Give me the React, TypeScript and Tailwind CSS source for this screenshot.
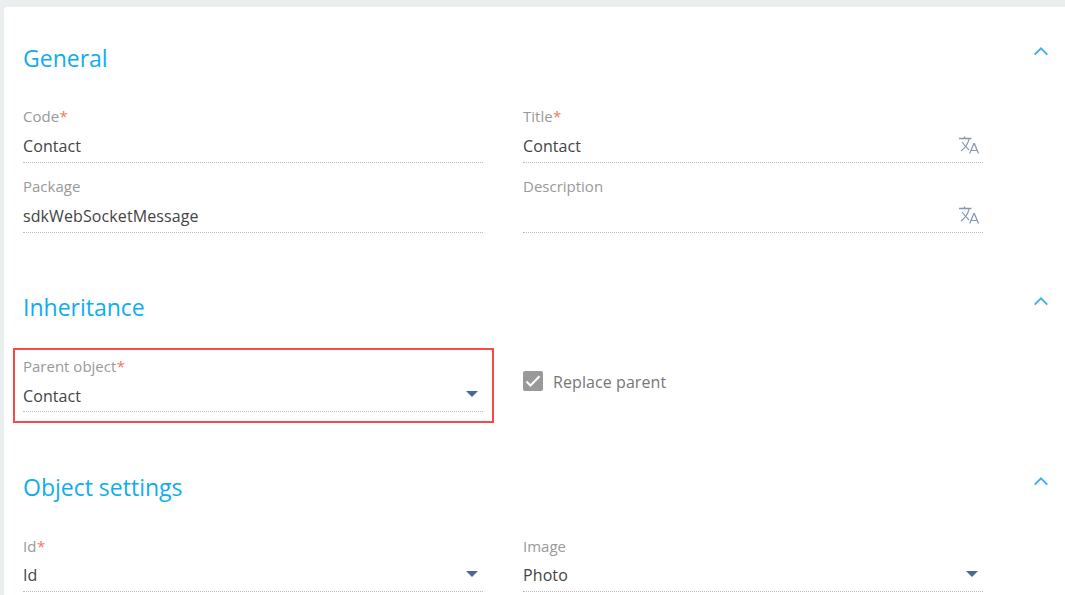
import type { ReactNode } from "react";

type FieldProps = {
  label: string;
  value?: string;
  required?: boolean;
  icon?: "translate" | "dropdown";
  row?: string;
  gap?: string;
  arrow?: string;
};

function TranslateIcon() {
  return (
    <svg className="mr-[3px] h-[20px] w-[22px]" viewBox="0 0 22 20" fill="none" stroke="#8497b5">
      <path d="M1 3.5H13.5" strokeWidth="1.3" />
      <path d="M6.500 1.500V3.500" strokeWidth="1.4" />
      <path d="M11 4C10 9 7 13 3 16M4 7C6 9.500 8 12 11 15" strokeWidth="1.2" />
      <path d="M11.700 18.600L15.800 8.700H16.400L20.500 18.600M13 15.500H19.200" strokeWidth="1.2" />
    </svg>
  );
}

function Arrow({ offset }: { offset: string }) {
  return (
    <svg className={`mr-[5px] h-[6px] w-[12px] ${offset}`} viewBox="0 0 12 6">
      <path d="M0 0H12L6 6Z" fill="#4b6799" />
    </svg>
  );
}

function Field({
  label,
  value,
  required,
  icon,
  row = "h-[70px]",
  gap = "mt-[9px]",
  arrow = "mt-[6px]",
}: FieldProps) {
  return (
    <div className={`w-[460px] border-b border-dotted border-[#bdbdbd] pt-[13px] ${row}`}>
      <div className="h-[20px] text-[15px] leading-[20px] text-[#999]">
        {label}
        {required && <span className="ml-[0.5px] text-[#f5775c]">*</span>}
      </div>
      <div
        className={`flex h-[22px] items-start justify-between text-[16px] leading-[22px] tracking-[0.1px] text-[#444] ${gap}`}
      >
        <span>{value}</span>
        {icon === "translate" && <TranslateIcon />}
        {icon === "dropdown" && <Arrow offset={arrow} />}
      </div>
    </div>
  );
}

function Chevron({ offset }: { offset: string }) {
  return (
    <svg className={`h-[10px] w-[16px] ${offset}`} viewBox="0 0 16 10" fill="none">
      <path d="M1.700 8.600L8 2.400L14.300 8.600" stroke="#41aeef" strokeWidth="2" />
    </svg>
  );
}

function Section({
  title,
  height,
  top = "pt-[34px]",
  chevron = "mt-[5px]",
  children,
}: {
  title: string;
  height: string;
  top?: string;
  chevron?: string;
  children: ReactNode;
}) {
  return (
    <section className={height}>
      <header className={`flex h-[86px] items-start justify-between pr-[16px] ${top}`}>
        <h2 className="text-[23px] leading-[32px] text-[#0fadf0]">{title}</h2>
        <Chevron offset={chevron} />
      </header>
      <div className="grid grid-cols-[460px_460px] gap-x-[40px]">{children}</div>
    </section>
  );
}

export default function App() {
  return (
    <div className="h-[595px] overflow-hidden bg-[#eaeeee] pl-[4px] pt-[7px] font-['Open_Sans',sans-serif]">
      <main className="h-[588px] overflow-hidden rounded-tl-[3px] bg-white pl-[19px]">
        <Section title="General" height="h-[250px]" top="pt-[35px]" chevron="mt-[4px]">
          <Field label="Code" value="Contact" required />
          <Field label="Title" value="Contact" required icon="translate" />
          <Field label="Package" value="sdkWebSocketMessage" />
          <Field label="Description" icon="translate" />
        </Section>
        <Section title="Inheritance" height="h-[180px]">
          <div className="relative">
            <Field label="Parent object" value="Contact" required icon="dropdown" row="h-[69px]" />
            <div className="pointer-events-none absolute -left-[10px] top-[5px] h-[75px] w-[481px] border-2 border-[#f94848]" />
          </div>
          <label className="flex h-[69px] items-start gap-[10px] pt-[28px]">
            <span className="h-[20px] w-[20px] rounded-[2px] bg-[#999]">
              <svg className="h-[20px] w-[20px]" viewBox="0 0 20 20" fill="none">
                <path d="M3.500 10.500L7.500 14.500L16.500 5.200" stroke="#fff" strokeWidth="2" />
              </svg>
            </span>
            <span className="text-[16px] leading-[22px] tracking-[0.08px] text-[#777]">Replace parent</span>
          </label>
        </Section>
        <Section title="Object settings" height="h-[158px]">
          <Field label="Id" value="Id" required icon="dropdown" row="h-[69px]" gap="mt-[8px]" arrow="mt-[7px]" />
          <Field label="Image" value="Photo" icon="dropdown" row="h-[69px]" gap="mt-[8px]" arrow="mt-[7px]" />
        </Section>
      </main>
    </div>
  );
}
